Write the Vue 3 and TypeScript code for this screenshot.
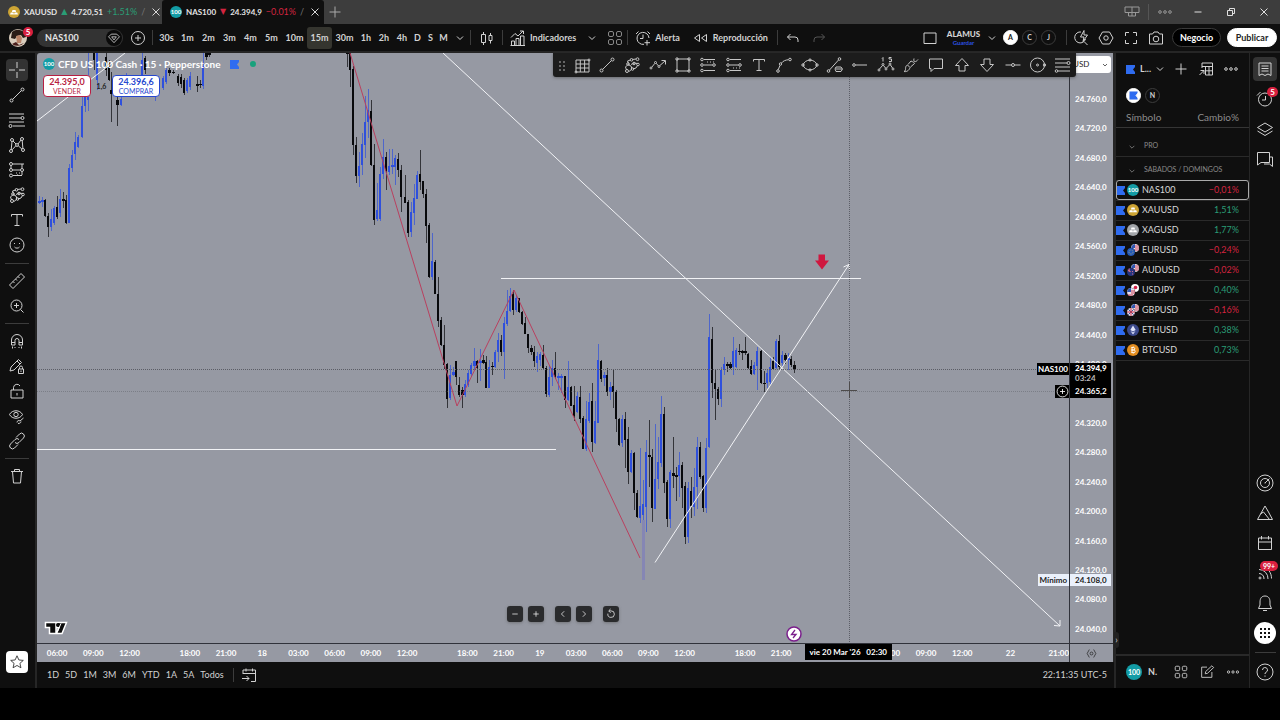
<script setup lang="ts">
import { h } from 'vue'

type Candle = [x: number, high: number, low: number, top: number, bottom: number, up: 0 | 1]

const ring = (x: number, y: number, r: number): string =>
  `M${x - r} ${y}a${r} ${r} 0 1 0 ${2 * r} 0a${r} ${r} 0 1 0 ${-2 * r} 0`

const paths: Record<string, string> = {
  cross: 'M9 1v6M9 11v6M1 9h6M11 9h6',
  line: ring(3.5, 14.5, 1.5) + ring(14.5, 3.5, 1.5) + 'M4.6 13.4L13.4 4.6',
  fib: 'M1 3h15M1 7h12M1 11h15M5 15h12' + ring(14.5, 7, 1.5) + ring(2.5, 15, 1.5),
  pattern: ring(3, 15, 1.5) + ring(4, 4, 1.5) + ring(9, 9, 1.4) + ring(14, 3, 1.5) + ring(15, 14, 1.5) + 'M3.2 13.5L4 5.5M5 5l3 3M10 8l3-4M14.2 4.5l.7 8M10.2 9.8l3.7 3.2M7.8 9.8l-3.6 4',
  forecast: ring(3, 3, 1.5) + ring(3, 9, 1.5) + ring(3, 14.5, 1.5) + ring(14, 9, 1.5) + 'M5 3h11M5 9h7M5 14.5h9M3 4.5v3M14 3v4M14 11v3M8 12h1M11 12h1M9 14h1',
  brush: 'M3.500 14l-1-3L5 8.500 8 10l1 3-3 2.500M5.500 7.500L4.500 5 7.500 4M9.500 3.500L13 3M8 8.500L11 7l3.500.5M10 13l3-1 1.500-2.500' + ring(8.5, 3.8, 1.3) + ring(14.5, 3.2, 1.4) + ring(5, 8, 1.3) + ring(11, 7.5, 1.3) + ring(4, 15, 1.5) + ring(9.5, 13, 1.3) + ring(15, 8.5, 1.3),
  text: 'M3.5 5.500V3.500h11v2M9 3.500v11M6.500 14.500h5',
  smile: ring(9, 9, 7) + 'M6.500 7v1M11.500 7v1M6.500 11c1 1.500 4 1.500 5 0',
  ruler: 'M1.500 13L13 1.500 16.500 5 5 16.500zM5 9.500l1.500 1.500M7.500 7L9 8.500M10 4.500l1.500 1.500',
  zoomin: ring(8.5, 8.500, 5.500) + 'M12.500 12.500l3 3M8.500 6v5M6 8.500h5',
  magnet: 'M3.500 13V8a5.500 5.500 0 0 1 11 0v5h-3.500V8.500a2 2 0 0 0-4 0V13zM3.500 10.500H7M11 10.500h3.500M4.500 14.500v2M13.500 14.500v2M7 15v1M11 15v1',
  editlock: 'M2 14l1-4 7.500-7.500 3 3L6 13zM9 4l3 3M10.500 12h5v4.500h-5zM11.500 12v-1.500a1.500 1.500 0 0 1 3 0V12M13 13.500v1.500',
  lock: 'M3 8h12v8H3zM5.500 8V5.500a3.500 3.500 0 0 1 6.500-1.500M9 11v2.500',
  eye: 'M1.500 7.500C4 2.500 12 2.500 14.500 7.500 12 12.500 4 12.500 1.500 7.500z' + ring(8, 7.5, 2.200) + 'M9 15.500c0-2 2-2.500 3-1.500l3.500-3M10 16.500c2 0 3-1 3-2',
  link: 'M8 5.500L11.500 2a2.800 2.800 0 0 1 4 4l-4.500 4.500a2.800 2.800 0 0 1-4 0M10 12.500L6.500 16a2.800 2.800 0 0 1-4-4L7 7.500a2.800 2.800 0 0 1 4 0',
  trash: 'M3 4.500h12M6.500 4.500V2.500h5v2M4.500 4.500l1 11.500h7l1-11.500',
  star: 'M9 2l2.100 4.700 5 .5-3.800 3.300 1.100 5L9 12.900l-4.400 2.600 1.100-5L1.900 7.200l5-.5z',
  grid: 'M3 4h13v12H3zM3 8h13M3 12h13M7.300 4v12M11.600 4v12' + ring(3, 16, 1) + ring(16, 4, 1),
  zigzag: ring(2, 12, 1) + ring(6.5, 6.5, 1) + ring(10, 10.500, 1) + 'M2.800 11.200l3-3.800M7.300 7.300l2 2.500M10.700 9.700L16 5M12.500 4.500H16.500V8.500',
  rect: 'M3 3h12v12H3z' + ring(3, 3, 1.2) + ring(15, 3, 1.2) + ring(3, 15, 1.2) + ring(15, 15, 1.2),
  longpos: ring(3, 3.5, 1.3) + ring(3, 9, 1.3) + ring(3, 14.5, 1.3) + ring(15, 9, 1.3) + 'M5 3.500h11M5 9h8.500M5 14.500h11M8 6h1M11 6h1M14 6h1',
  shortpos: ring(3, 3.5, 1.3) + ring(3, 9, 1.3) + ring(3, 14.5, 1.3) + ring(15, 9, 1.3) + 'M5 3.500h11M5 9h8.500M5 14.500h11M8 12h1M11 12h1M14 12h1',
  curve: ring(3, 15, 1.3) + ring(5.5, 8, 1.200) + ring(15, 3.500, 1.300) + 'M3.300 13.600L5 9.300M6.500 7c1.500-2 4-3 7-3.300',
  ellipse: 'M2 9C4 2.500 14 2.500 16 9 14 15.500 4 15.500 2 9z' + ring(2, 9, 1.2) + ring(16, 9, 1.2) + ring(9, 4, 1.1) + ring(9, 14, 1.1),
  lineobj: ring(2.5, 15, 1.300) + ring(13.5, 3, 1.3) + 'M3.500 14L12.500 4M10 11h5l1.500 2-1.500 2.500h-5L9 13zM10 13h6',
  ray: ring(3, 9, 1.300) + 'M4.500 9H16',
  elliott: ring(2, 14, 1) + ring(6, 8.500, 1) + ring(9, 13, 1) + ring(13, 8, 1) + ring(16, 13, 1) + 'M2.500 13L5.500 9.500M6.500 9.500l2 2.500M9.600 12l2.800-3M13.500 9l2 3M6 1.500v4M5 2.500l1-1M14.500 1.500H12V3h2.500v2.500H12',
  paint: 'M2 15.500c3-1 0-5 3.500-6.500L8 11.500C7 15 4 16 2 15.500zM6 8.500L9 5M8.500 11l4-3.500M9 5c2 1 3 1 3.500 2.500M12 2.500c-1 4 2 4 4 1',
  callout: 'M2.500 3h13v9.500H7L4 15.500v-3H2.500z',
  up: 'M9 2.500l6.500 7H12V15H6V9.500H2.500z',
  down: 'M9 15.500l6.500-7H12V3H6v5.500H2.500z',
  hline: ring(9, 9, 1.500) + 'M1.500 9h6M10.500 9h6',
  circle: ring(8.5, 9, 7) + ring(8.5, 9, 1) + ring(15.5, 9, 1.200),
  levels: 'M1 3h15M1 7h12M1 11h15M4 15h12' + ring(14.500, 7, 1.500) + ring(2.500, 15, 1.300),
  chev: 'M6 7.500l3 3 3-3',
  plus: 'M9 3.500v11M3.500 9h11',
  pluscircle: ring(9, 9, 6.5) + 'M9 6v6M6 9h6',
  candles: 'M3.500 5.500h4v8h-4zM5.500 3v2.500M5.500 13.500V16M11 6.500h3v5h-3zM12.500 4v2.500M12.500 11.500V14.500',
  chart: 'M2.500 16v-4h3v4M7 16V9.500h3V16M11.500 16V7h3.500v9M1.500 16.500h14.500M2 8.500l4-4 3 2.500 5-5M11 2h3.500v3',
  tiles: 'M2.500 4a1.500 1.500 0 0 1 1.500-1.500h2A1.500 1.500 0 0 1 7.500 4v2A1.500 1.500 0 0 1 6 7.500H4A1.500 1.500 0 0 1 2.500 6zM10.500 4A1.500 1.500 0 0 1 12 2.500h2A1.500 1.500 0 0 1 15.500 4v2A1.500 1.500 0 0 1 14 7.500h-2A1.500 1.500 0 0 1 10.500 6zM2.500 12A1.500 1.500 0 0 1 4 10.500h2A1.500 1.500 0 0 1 7.500 12v2A1.500 1.500 0 0 1 6 15.500H4A1.500 1.500 0 0 1 2.500 14zM10.500 12a1.500 1.500 0 0 1 1.500-1.500h2a1.500 1.500 0 0 1 1.500 1.500v2a1.500 1.500 0 0 1-1.500 1.500h-2a1.500 1.500 0 0 1-1.500-1.500z',
  alarm: 'M10 15.300A6 6 0 1 1 15 9M9 5.500v4H6M2 5l2.500-2.500M13.500 2.500L16 5M13 11v5.500M10.500 13.700h5.500',
  clock: ring(9, 9.5, 6.500) + 'M9.500 6v4H6M1 5.500L4.500 2M13.500 2l3.500 3.500',
  replay: 'M7.500 5.500v7L2.500 9zM14.500 5.500v7L9.500 9z',
  undo: 'M6.500 5L3.500 8l3 3M3.500 8h7.500a3 3 0 0 1 3 3v2',
  redo: 'M11.500 5l3 3-3 3M14.500 8H7a3 3 0 0 0-3 3v2',
  square: 'M3 4h12v10.500H3z',
  search: 'M9 3A5.500 5.500 0 1 0 13.500 10M12 12.500l3.500 3.500M12 1.500L8.500 8H12l-1 4.500 4.500-6.500H12z',
  hex: 'M5.500 3h7L16 9l-3.500 6h-7L2 9z' + ring(9, 9, 2.200),
  full: 'M3.500 7V3.500H7M11 3.500h3.500V7M14.500 11v3.500H11M7 14.500H3.500V11',
  camera: 'M2.500 5h3L7 3h4l1.500 2h3v10h-13z' + ring(9, 10, 2.800),
  gem: 'M5.500 4h7L16 7.500 9 15 2 7.500zM6 7.500h6l-3 4z',
  table: 'M5 3h10.500v12H8.500M5 3v5M5 6.500h10.500M8.500 10.800h7M8.500 6.500V15M12 6.500V15M2.500 15l4.500-4.500M3.500 10.500H7V14',
  dots: ring(4, 9, 1.300) + ring(9, 9, 1.300) + ring(14, 9, 1.3),
  list: 'M3 3h12v12.500l-3-1.500-3 1.500-3-1.500-3 1.500zM5.500 6h7M5.500 8.500h7M5.500 11h7',
  layers: 'M9 3l7.500 4.500L9 12 1.500 7.500zM1.500 11L9 15.500 16.500 11',
  chat: 'M1.500 2.500h12v10H5L1.500 15zM16.500 7v9.500L13.500 14H8M13.500 7h3',
  target: ring(9, 9, 8) + ring(9, 9, 4.500) + 'M9 9l4.500-4.500M9 8.500v1',
  mount: 'M9 2L12.500 8M9 2L1.500 15.500h15L12.500 8M4.500 10L7.500 8l6 7.500',
  calendar: 'M2.500 4h13v11.500h-13zM2.500 8h13M5.500 2v3.500M12.500 2v3.500',
  feed: ring(4, 14, 1) + 'M3 9.500a5 5 0 0 1 5 5.500M3 5.500A9 9 0 0 1 12 15M6 2.500c6 1 9.500 6 9.500 12',
  bell: 'M9 2c-3.500 0-5 2.500-5 6v3l-1.500 3.500h13L14 11V8c0-3.500-1.500-6-5-6zM7 16.500h4',
  apps: 'M4 4h2v2H4zM8 4h2v2H8zM12 4h2v2h-2zM4 8h2v2H4zM8 8h2v2H8zM12 8h2v2h-2zM4 12h2v2H4zM8 12h2v2H8zM12 12h2v2h-2z',
  help: ring(9, 9, 8) + 'M6.500 7a2.500 2.500 0 1 1 3.500 2.300c-.7.300-1 .7-1 1.700M9 12.500v1.200',
  pencil: 'M9 3.500H3v11.500h11.500V9M7 11l.5-2.500 7-6.500 2 2-7 6.500z',
  goto: 'M3 8V4h12.500v11.500H11M3 7.500h12.500M6 2.500v3M12.500 2.500v3M2 12.500h7M6.500 10l2.500 2.500L6.500 15',
  layout: 'M2 4h14v5.500H2zM9 4v9M5.500 9.500V13h7V9.500',
  close: 'M5.500 5.500l7 7M12.500 5.500l-7 7',
  min: 'M5.500 9h7',
  add: 'M5.500 9h7M9 5.500v7',
  max: 'M5.500 7.500h5v5h-5zM7.500 7.500v-2h5v5h-2',
  left: 'M10.500 5.500L7 9l3.500 3.500',
  right: 'M7.500 5.500L11 9l-3.500 3.500',
  reset: 'M5 8.500A4.200 4.200 0 1 0 9 5H6.500M8.500 2.500L6 5l2.500 2.500',
  gear: 'M6 3.500L3 9l3 5.500M12 3.500L15 9l-3 5.500' + ring(9, 9, 2),
}

const Icon = (p: { n: string }) =>
  h('svg', { class: 'ic', viewBox: '0 0 18 18', 'aria-hidden': 'true' }, [h('path', { d: paths[p.n] })])
Icon.props = ['n']

const intervals = [
  { t: '30s', c: 'w21' }, { t: '1m', c: 'w21' }, { t: '2m', c: 'w21' }, { t: '3m', c: 'w21' },
  { t: '4m', c: 'w21' }, { t: '5m', c: 'w21' }, { t: '10m', c: 'w25' }, { t: '15m', c: 'w25' },
  { t: '30m', c: 'w25' }, { t: '1h', c: 'w18' }, { t: '2h', c: 'w18' }, { t: '4h', c: 'w18' },
  { t: 'D', c: 'w13' }, { t: 'S', c: 'w13' }, { t: 'M', c: 'w13' },
]

const toolGroups = [
  ['cross', 'line', 'fib', 'pattern', 'forecast', 'brush', 'text', 'smile'],
  ['ruler', 'zoomin'],
  ['magnet', 'editlock', 'lock', 'eye', 'link'],
  ['trash'],
]

const favorites = ['grid', 'line', 'brush', 'zigzag', 'rect', 'longpos', 'shortpos', 'text', 'curve', 'ellipse',
  'lineobj', 'ray', 'elliott', 'paint', 'callout', 'up', 'down', 'hline', 'circle', 'levels']

// The 24.360,0 step is left blank: the crosshair price sits on it.
const prices = Array.from({ length: 19 }, (_, i) =>
  i === 10 ? '' : `24.${String(760 - i * 40).padStart(3, '0')},0`)

// '|' is a session break, '.' a half-width break, '' a step behind the date tooltip.
const times = ['06:00', '09:00', '12:00', '|', '18:00', '21:00', '18', '03:00', '06:00', '09:00', '12:00', '|',
  '18:00', '21:00', '19', '03:00', '06:00', '09:00', '12:00', '|', '18:00', '21:00', '', '', '06:00',
  '09:00', '12:00', '.', '22', '.', '21:00']

const ranges = ['1D', '5D', '1M', '3M', '6M', 'YTD', '1A', '5A', 'Todos']

const symbols = [
  { s: 'NAS100', v: '−0,01%', k: 'nas' },
  { s: 'XAUUSD', v: '1,51%', k: 'gold' },
  { s: 'XAGUSD', v: '1,77%', k: 'silver' },
  { s: 'EURUSD', v: '−0,24%', k: 'pair', a: '#2459b8', b: 'us' },
  { s: 'AUDUSD', v: '−0,02%', k: 'pair', a: '#28357f', b: 'us' },
  { s: 'USDJPY', v: '0,40%', k: 'pair', a: 'us', b: 'jp' },
  { s: 'GBPUSD', v: '−0,16%', k: 'pair', a: 'gb', b: 'us' },
  { s: 'ETHUSD', v: '0,38%', k: 'eth' },
  { s: 'BTCUSD', v: '0,73%', k: 'btc' },
]

const candles: Candle[] = [
  [39, 196, 204, 201, 203, 1], [42, 197, 207, 200, 202, 1], [45, 199, 217, 200, 216, 0], [48, 213, 237, 216, 227, 0],
  [51, 209, 231, 219, 227, 1], [54, 206, 225, 208, 223, 1], [57, 196, 219, 207, 217, 0], [60, 189, 217, 199, 213, 1],
  [63, 192, 208, 199, 201, 0], [66, 195, 224, 200, 223, 0], [69, 164, 223, 168, 223, 1], [72, 150, 172, 155, 168, 1],
  [75, 132, 160, 142, 154, 1], [78, 135, 148, 137, 147, 1], [82, 96, 138, 106, 137, 1], [85, 83, 112, 96, 106, 1],
  [88, 53, 111, 82, 100, 1], [94, 53, 70, 53, 60, 0], [97, 53, 90, 53, 80, 1], [106, 53, 76, 57, 70, 0],
  [109, 60, 81, 64, 80, 0], [111, 72, 122, 90, 94, 0], [117, 95, 126, 100, 105, 0], [121, 92, 106, 99, 105, 1],
  [126, 73, 92, 75, 90, 1], [142, 53, 80, 60, 76, 1], [145, 56, 74, 58, 70, 0], [155, 80, 101, 82, 96, 1], [163, 76, 90, 78, 88, 1],
  [166, 68, 84, 70, 82, 1], [169, 68, 76, 70, 73, 0], [173, 70, 74, 72, 73, 0], [178, 74, 86, 76, 83, 0],
  [181, 74, 88, 77, 84, 0], [184, 78, 95, 80, 93, 0], [187, 78, 93, 80, 91, 1], [190, 72, 90, 76, 87, 1],
  [197, 76, 92, 84, 86, 0], [200, 80, 88, 84, 85, 0], [203, 53, 89, 66, 86, 1], [206, 53, 60, 53, 57, 0], [209, 53, 57, 53, 55, 0],
  [347, 53, 67, 53, 54, 0], [350, 53, 87, 53, 70, 0], [353, 66, 155, 69, 145, 0], [356, 137, 183, 145, 176, 0],
  [359, 152, 187, 166, 176, 1], [362, 133, 175, 144, 165, 1], [365, 96, 158, 122, 145, 1], [368, 89, 138, 110, 122, 1],
  [371, 100, 166, 111, 165, 0], [374, 144, 225, 165, 220, 0], [377, 183, 221, 210, 219, 1], [380, 167, 221, 174, 219, 1],
  [383, 139, 179, 157, 174, 1], [386, 152, 190, 157, 171, 0], [389, 149, 175, 166, 172, 1], [392, 149, 174, 165, 167, 1],
  [395, 155, 185, 158, 167, 1], [398, 153, 177, 159, 170, 0], [401, 165, 212, 170, 197, 0], [405, 175, 203, 197, 203, 0],
  [408, 200, 237, 202, 233, 0], [411, 202, 237, 212, 232, 1], [414, 184, 225, 198, 213, 1], [417, 171, 199, 175, 199, 1],
  [420, 150, 190, 174, 182, 0], [423, 181, 198, 181, 194, 0], [426, 189, 243, 194, 226, 0], [429, 223, 278, 225, 277, 0],
  [432, 233, 280, 261, 277, 1], [435, 260, 294, 262, 294, 0], [438, 277, 327, 294, 321, 0], [441, 317, 346, 320, 345, 0],
  [444, 325, 369, 345, 365, 0], [447, 363, 408, 364, 399, 0], [450, 365, 400, 375, 398, 1], [453, 367, 376, 372, 375, 1],
  [456, 361, 385, 361, 377, 0], [459, 377, 397, 385, 395, 0], [462, 387, 408, 390, 395, 0], [465, 380, 397, 384, 395, 1],
  [468, 370, 387, 373, 385, 1], [471, 363, 377, 365, 374, 1], [474, 348, 370, 361, 366, 1], [477, 360, 383, 361, 368, 0],
  [480, 349, 381, 361, 363, 1], [483, 355, 364, 360, 363, 0], [486, 356, 388, 362, 388, 0], [489, 360, 388, 367, 388, 1],
  [492, 362, 375, 366, 367, 0], [495, 350, 368, 352, 367, 1], [498, 333, 362, 340, 352, 1], [501, 335, 356, 340, 352, 0],
  [504, 317, 379, 323, 352, 1], [507, 290, 326, 311, 324, 1], [510, 288, 312, 296, 311, 1], [513, 290, 315, 294, 310, 0],
  [516, 295, 312, 298, 310, 1], [519, 298, 313, 298, 312, 0], [522, 311, 325, 312, 324, 0], [525, 317, 334, 323, 334, 0],
  [528, 334, 353, 334, 348, 0], [531, 345, 355, 348, 352, 0], [534, 346, 367, 352, 361, 0], [537, 352, 372, 356, 363, 1],
  [540, 352, 366, 354, 360, 1], [543, 345, 370, 355, 368, 0], [546, 366, 397, 368, 394, 0], [549, 366, 397, 377, 395, 1],
  [552, 360, 386, 368, 377, 1], [555, 352, 379, 368, 377, 0], [558, 373, 390, 376, 378, 1], [561, 374, 393, 376, 378, 1],
  [565, 376, 408, 376, 400, 0], [568, 361, 401, 387, 400, 1], [571, 386, 406, 387, 406, 0], [574, 386, 421, 405, 416, 0],
  [577, 392, 413, 396, 412, 1], [580, 386, 423, 397, 419, 0], [583, 416, 449, 418, 449, 0], [586, 401, 451, 419, 449, 1],
  [589, 393, 423, 402, 421, 1], [592, 383, 452, 401, 442, 0], [595, 401, 444, 421, 443, 1], [598, 344, 423, 360, 423, 1],
  [601, 360, 382, 361, 379, 0], [604, 372, 386, 375, 378, 1], [607, 368, 396, 375, 392, 0], [610, 382, 400, 387, 392, 1],
  [613, 370, 408, 386, 392, 0], [616, 390, 432, 392, 419, 0], [619, 418, 446, 419, 445, 0], [622, 415, 447, 419, 443, 1],
  [625, 412, 468, 419, 440, 0], [628, 427, 484, 439, 472, 0], [631, 450, 473, 453, 472, 1], [634, 452, 510, 453, 493, 0],
  [637, 490, 518, 493, 517, 0], [640, 448, 523, 506, 518, 1], [643, 480, 520, 504, 515, 1], [646, 440, 532, 452, 507, 1],
  [649, 420, 487, 455, 457, 0], [652, 449, 522, 457, 508, 0], [655, 424, 509, 479, 509, 1], [658, 437, 489, 462, 479, 1],
  [661, 396, 467, 414, 463, 1], [664, 407, 493, 414, 483, 0], [667, 480, 527, 482, 519, 0], [670, 470, 528, 472, 519, 1],
  [673, 437, 488, 473, 476, 0], [676, 467, 501, 475, 477, 0], [679, 452, 497, 465, 476, 1], [682, 462, 508, 465, 488, 0],
  [685, 482, 544, 486, 537, 0], [688, 482, 543, 488, 537, 1], [691, 477, 518, 491, 506, 0], [694, 468, 516, 487, 507, 1],
  [697, 437, 509, 447, 487, 1], [700, 442, 479, 447, 477, 0], [703, 475, 512, 476, 508, 0], [706, 438, 513, 448, 508, 1],
  [709, 314, 448, 337, 447, 1], [712, 327, 398, 339, 383, 0], [715, 370, 420, 383, 389, 0], [718, 387, 405, 389, 399, 0],
  [721, 367, 407, 370, 399, 1], [724, 357, 375, 364, 370, 1], [727, 362, 372, 364, 366, 0], [730, 362, 369, 364, 368, 0],
  [733, 337, 375, 351, 367, 1], [736, 348, 368, 350, 367, 1], [739, 344, 355, 351, 352, 0], [742, 350, 360, 351, 353, 0],
  [745, 337, 355, 351, 353, 0], [748, 353, 369, 354, 368, 0], [751, 360, 375, 366, 374, 0], [754, 362, 375, 365, 374, 1],
  [757, 347, 390, 351, 366, 1], [761, 350, 384, 351, 383, 0], [764, 371, 392, 383, 384, 0], [767, 370, 388, 373, 383, 1],
  [770, 357, 384, 367, 382, 1], [773, 357, 370, 361, 369, 0], [776, 339, 369, 341, 368, 1], [779, 335, 369, 341, 367, 0],
  [782, 351, 367, 355, 363, 1], [785, 353, 364, 355, 360, 0], [788, 353, 370, 358, 360, 1], [791, 356, 367, 359, 365, 0],
  [794, 361, 373, 365, 369, 0],
]
</script>

<template>
  <div class="app">
    <header class="tabs">
      <div class="tab">
        <svg class="coin" viewBox="0 0 12 12"><circle cx="6" cy="6" r="6" fill="#cda434" /><path d="M4.500 4h3l.6 2H3.900zM2.800 6.500h2.700L6 8.500H2zM6.500 6.500h2.700l.8 2H6z" fill="#fff" /></svg>
        <b>XAUUSD</b><i class="pos">▲</i><b>4.720,51</b><span class="pos">+1.51%</span><span class="dim">/</span>
        <button aria-label="Cerrar pestaña"><Icon n="close" /></button>
      </div>
      <div class="tab active">
        <span class="hundred">100</span>
        <b>NAS100</b><i class="neg">▼</i><b>24.394,9</b><span class="neg">−0.01%</span><span class="dim">/</span>
        <button aria-label="Cerrar pestaña"><Icon n="close" /></button>
      </div>
      <button class="newtab" aria-label="Nueva pestaña"><Icon n="plus" /></button>
      <div class="window">
        <button class="muted" aria-label="Diseño"><Icon n="layout" /></button>
        <button class="muted sep" aria-label="Más"><Icon n="dots" /></button>
        <button aria-label="Minimizar"><Icon n="min" /></button>
        <button aria-label="Restaurar"><Icon n="max" /></button>
        <button aria-label="Cerrar"><Icon n="close" /></button>
      </div>
    </header>

    <nav class="toolbar">
      <button class="avatar" aria-label="Perfil">
        <svg viewBox="0 0 18 18"><circle cx="9" cy="9" r="9" fill="#d9cdbd" /><path d="M3 3a9 9 0 0 1 13 1l1 4-3 1-2-3-4 1-2 3-4-1z" fill="#2a1c17" /><path d="M7 7l4-1 2 3-1 5H8z" fill="#b98368" /><path d="M3 15l4-2 3 3 5-2a9 9 0 0 1-12 1z" fill="#4b1f1c" /></svg>
        <span class="badge">5</span>
      </button>
      <button class="symbol"><span>NAS100</span><span class="gem"><Icon n="gem" /></span></button>
      <button class="w28" aria-label="Comparar"><Icon n="pluscircle" /></button>
      <hr />
      <button v-for="i in intervals" :key="i.t" class="iv" :class="[i.c, { on: i.t === '15m' }]">{{ i.t }}</button>
      <button class="w20" aria-label="Intervalos"><Icon n="chev" /></button>
      <hr />
      <button class="w31" aria-label="Velas"><Icon n="candles" /></button>
      <hr />
      <button class="labeled ind"><Icon n="chart" />Indicadores</button>
      <button class="w20" aria-label="Favoritos"><Icon n="chev" /></button>
      <button class="w25 gray" aria-label="Plantillas"><Icon n="tiles" /></button>
      <hr />
      <button class="labeled"><Icon n="alarm" />Alerta</button>
      <button class="labeled replay"><Icon n="replay" />Reproducción</button>
      <hr />
      <button class="w31" aria-label="Deshacer"><Icon n="undo" /></button>
      <button class="w21 off" aria-label="Rehacer"><Icon n="redo" /></button>
      <div class="right">
        <button class="w28" aria-label="Pantalla"><Icon n="square" /></button>
        <button class="save"><b>ALAMUS</b><small>Guardar</small></button>
        <button class="w18" aria-label="Diseños"><Icon n="chev" /></button>
        <button class="dot white">A</button>
        <button class="dot">C</button>
        <button class="dot">J</button>
        <hr />
        <button class="w25" aria-label="Búsqueda rápida"><Icon n="search" /></button>
        <button class="w25" aria-label="Configuración"><Icon n="hex" /></button>
        <button class="w25" aria-label="Pantalla completa"><Icon n="full" /></button>
        <button class="w25" aria-label="Captura"><Icon n="camera" /></button>
        <button class="pill">Negocio</button>
        <button class="pill publish">Publicar</button>
      </div>
    </nav>

    <main class="main">
      <aside class="tools">
        <template v-for="(g, gi) in toolGroups" :key="gi">
          <div class="group">
            <button v-for="t in g" :key="t" :class="{ on: t === 'cross' }" :aria-label="t"><Icon :n="t" /></button>
          </div>
          <hr v-if="gi < 3" />
        </template>
        <button class="fav" aria-label="Favoritos"><Icon n="star" /></button>
      </aside>

      <section class="center">
        <div class="chart">
          <div class="plot">
            <svg class="canvas" viewBox="37 53 1032 590" preserveAspectRatio="none">
              <g v-for="(c, i) in candles" :key="i" :fill="c[5] ? '#2f50dc' : '#08090c'" shape-rendering="crispEdges">
                <rect :x="c[0]" :y="c[1]" width="1" :height="c[2] - c[1]" opacity="0.7" />
                <rect :x="c[0] - 1" :y="c[3]" :width="c[3] < c[4] - 5 ? 2 : 3" :height="c[4] - c[3]" />
              </g>
              <rect x="642" y="520" width="3" height="60" fill="#8586b4" />
              <path class="red" d="M350 53L457 406L514 290L640 558" />
              <path class="white" d="M37 121L125 53M443 53L1060 626M1054 625.500l6 .5v-6M655 562.500L849 264.500M843.500 267l5.500-2.500.5 6" />
              <path class="white crisp" d="M501 278.500H861M37 449.500H556" />
              <path class="dots" d="M37 369.500H1069" />
              <path class="dots faint" d="M37 391.500H1069" />
              <path class="dots" d="M849.500 53V643" />
              <path d="M841 390.500h16M849.500 382v16" stroke="#4d4b4b" />
              <path d="M818.500 254.500h6.500v6h4L822 269.500 815 260.500h3.500z" fill="#cf173f" />
            </svg>

            <div class="legend">
              <div class="title"><span class="hundred">100</span><b>CFD US 100 Cash · 15 · Pepperstone</b><svg class="flag" viewBox="0 0 9 9"><path d="M0 0h9v2L7 4.500 9 7v2H0z" fill="#2f6cf0" /></svg><span class="live" /></div>
              <div class="quote">
                <button class="sell"><b>24.395,0</b>VENDER</button>
                <span>1,6</span>
                <button class="buy"><b>24.396,6</b>COMPRAR</button>
              </div>
            </div>

            <svg class="logo" viewBox="0 0 24 15"><path d="M1.500 1.500h10.500v11H5.500v-6h-4zM13 1.500h9.500l-4.500 11h-5.500l2.500-6h-2z" fill="#0b0b0b" stroke="#fff" stroke-width="1.500" /><circle cx="14" cy="4" r="2" fill="#0b0b0b" /><path d="M17 2.500l-4 9" stroke="#fff" /></svg>

            <div class="controls">
              <button aria-label="Alejar"><Icon n="min" /></button>
              <button aria-label="Acercar" class="space"><Icon n="add" /></button>
              <button aria-label="Izquierda"><Icon n="left" /></button>
              <button aria-label="Derecha" class="space"><Icon n="right" /></button>
              <button aria-label="Restablecer"><Icon n="reset" /></button>
            </div>
            <button class="event" aria-label="Evento"><svg viewBox="0 0 16 16"><circle cx="8" cy="8" r="7" fill="#fff" stroke="#7b1f8c" stroke-width="1.500" /><path d="M9 4L5.500 8.500h4.500L7 12" fill="none" stroke="#7b1f8c" stroke-width="1.300" /></svg></button>
            <span class="tag sym">NAS100</span>
            <button class="tag add" aria-label="Añadir"><Icon n="pluscircle" /></button>
            <span class="tag minlabel">Mínimo</span>
          </div>

          <div class="prices">
            <select aria-label="Divisa"><option>USD</option></select>
            <Icon n="chev" class="selchev" />
            <div class="scale"><span v-for="(p, i) in prices" :key="i">{{ p }}</span></div>
            <div class="last"><b>24.394,9</b><span>03:24</span></div>
            <div class="cursor">24.365,2</div>
            <div class="low">24.108,0</div>
          </div>

          <div class="times">
            <div class="track">
              <span v-for="(t, i) in times" :key="i" :class="{ gap: t === '|', half: t === '.' }">{{ t === '|' || t === '.' ? '' : t }}</span>
            </div>
            <div class="when">vie 20 Mar '26 &nbsp; 02:30</div>
          </div>
          <button class="corner" aria-label="Ajustes de escala"><Icon n="gear" /></button>

          <div class="floating">
            <i class="grip" />
            <button v-for="f in favorites" :key="f" :aria-label="f"><Icon :n="f" /></button>
          </div>
        </div>

        <footer class="ranges">
          <button v-for="r in ranges" :key="r">{{ r }}</button>
          <hr />
          <button aria-label="Ir a"><Icon n="goto" /></button>
          <span class="clock">22:11:35 UTC-5</span>
        </footer>
      </section>

      <section class="panel">
        <div class="phead">
          <button class="list"><svg class="flag" viewBox="0 0 9 9"><path d="M0 0h9v2L7 4.500 9 7v2H0z" fill="#2f6cf0" /></svg>L...<Icon n="chev" /></button>
          <button aria-label="Añadir símbolo"><Icon n="plus" /></button>
          <button aria-label="Tabla"><Icon n="table" /></button>
          <button aria-label="Más"><Icon n="dots" /></button>
        </div>
        <div class="lists">
          <button class="dot white" aria-label="Lista azul"><svg class="flag" viewBox="0 0 9 9"><path d="M0 0h9v2L7 4.500 9 7v2H0z" fill="#2f6cf0" /></svg></button>
          <button class="dot">N</button>
        </div>
        <table>
          <colgroup><col class="cmark"><col><col class="cval"></colgroup>
          <thead><tr><th colspan="2">Símbolo</th><th class="val">Cambio%</th></tr></thead>
          <tbody>
            <tr class="section first"><td colspan="3"><Icon n="chev" />PRO</td></tr>
            <tr class="section"><td colspan="3"><Icon n="chev" />SABADOS / DOMINGOS</td></tr>
            <tr v-for="r in symbols" :key="r.s" :class="{ sel: r.s === 'NAS100' }">
              <td><svg class="flag" viewBox="0 0 9 9"><path d="M0 0h9v2L7 4.500 9 7v2H0z" fill="#2f6cf0" /></svg></td>
              <td>
                <div class="name">
                  <span v-if="r.k === 'nas'" class="hundred">100</span>
                  <svg v-else class="coin" viewBox="0 0 12 12">
                    <template v-if="r.k === 'pair'">
                      <g :fill="r.b === 'jp' ? '#fff' : '#e9e4ec'"><circle cx="8" cy="4" r="4" /></g>
                      <circle v-if="r.b === 'jp'" cx="8.500" cy="3.500" r="1.800" fill="#d5224a" />
                      <path v-else d="M8 2h3.500M8 4h4M6 6h5.500" stroke="#cf3348" stroke-width="0.900" />
                      <path v-if="r.b === 'us'" d="M4.500 2.500A4 4 0 0 1 8 0v4H4.500z" fill="#3156b0" />
                      <circle cx="4" cy="8" r="4.300" fill="#0f0f0f" />
                      <circle cx="4" cy="8" r="3.900" :fill="r.a === 'us' || r.a === 'gb' ? '#e6e0ea' : r.a" />
                      <path v-if="r.a === 'us'" d="M4 7h4M4 9h4M1 11h5" stroke="#cf3348" stroke-width="0.900" />
                      <path v-if="r.a === 'us'" d="M.2 7.500A4 4 0 0 1 4 4v4H.2z" fill="#3156b0" />
                      <path v-if="r.a === 'gb'" d="M1.300 5.300l5.400 5.400M6.700 5.300l-5.400 5.400" stroke="#3f4f96" />
                      <path v-if="r.a === 'gb'" d="M4 4.100v7.800M.1 8h7.800" stroke="#cf3348" />
                      <circle v-if="r.s === 'EURUSD'" cx="4" cy="8" r="2" fill="none" stroke="#d6c768" stroke-width="0.700" stroke-dasharray="0.700 0.900" />
                      <path v-if="r.s === 'AUDUSD'" d="M.8 6l3 1.800M2.200 4.500V8M5.500 7v1M5 10h1" stroke="#e5738a" stroke-width="0.900" />
                    </template>
                    <template v-else-if="r.k === 'eth'"><circle cx="6" cy="6" r="6" fill="#3c4a8c" /><path d="M6 1.500L8.700 6 6 7.600 3.300 6zM3.500 7L6 10.500 8.500 7 6 8.500z" fill="#dfe4fa" /></template>
                    <template v-else-if="r.k === 'btc'"><circle cx="6" cy="6" r="6" fill="#e28d20" /><path d="M4.500 3.500h2a1.200 1.200 0 0 1 0 2.500h-2M4.500 6h2.400a1.300 1.300 0 0 1 0 2.600H4.500M5 3v6M6.300 2.500v1M6.300 8.500v1" fill="none" stroke="#fff" stroke-width="0.900" /></template>
                    <template v-else><circle cx="6" cy="6" r="6" :fill="r.k === 'gold' ? '#cda434' : '#a2a5a9'" /><path d="M4.500 3.500h3l.6 2H3.900zM2.800 6.200h2.700l.5 2H2zM6.500 6.200h2.700l.8 2H6z" fill="#fff" /></template>
                  </svg>
                  <span>{{ r.s }}</span>
                </div>
              </td>
              <td class="val" :class="r.v.startsWith('−') ? 'neg' : 'pos'">{{ r.v }}</td>
            </tr>
          </tbody>
        </table>
        <div class="detail">
          <span class="hundred big">100</span><b>N.</b>
          <button aria-label="Cuadrícula"><Icon n="tiles" /></button>
          <button aria-label="Nota"><Icon n="pencil" /></button>
          <button aria-label="Más"><Icon n="dots" /></button>
        </div>
        <button class="handle" aria-label="Contraer panel">›</button>
      </section>

      <aside class="rail">
        <button class="on" aria-label="Lista de seguimiento"><Icon n="list" /></button>
        <button aria-label="Alertas"><Icon n="clock" /><span class="badge">5</span></button>
        <button aria-label="Capas"><Icon n="layers" /></button>
        <button aria-label="Chats"><Icon n="chat" /></button>
        <button class="push" aria-label="Filtros"><Icon n="target" /></button>
        <button aria-label="Pine"><Icon n="mount" /></button>
        <button aria-label="Calendario"><Icon n="calendar" /></button>
        <button aria-label="Noticias"><Icon n="feed" /><span class="badge wide">99+</span></button>
        <button aria-label="Notificaciones"><Icon n="bell" /></button>
        <button class="apps" aria-label="Productos"><Icon n="apps" /></button>
        <hr />
        <button aria-label="Ayuda"><Icon n="help" /></button>
      </aside>
    </main>
  </div>
</template>

<style>
body { background: #000; }
</style>

<style scoped>
.app { display: flex; flex-direction: column; box-sizing: border-box; height: 100vh; min-height: 600px; padding-bottom: 32px; background: #000; color: #d2d2d2; font: 400 9px/12px Lato, "Open Sans", sans-serif; overflow: hidden; }
.app *, .app *::before { box-sizing: border-box; }
button { display: flex; align-items: center; justify-content: center; flex: none; padding: 0; border: 0; background: none; color: inherit; font: inherit; cursor: pointer; position: relative; }
hr { flex: none; margin: 0; border: 0; background: #3c3c3c; }
.ic { display: block; flex: none; width: 18px; height: 18px; fill: none; stroke: currentColor; stroke-width: 1; }
.pos { color: #2a9d76; }
.neg { color: #d3243f; }
.coin { display: block; flex: none; width: 12px; height: 12px; }
.hundred { display: flex; align-items: center; justify-content: center; flex: none; width: 12px; height: 12px; border-radius: 50%; background: #139ca5; color: #fff; font: 700 6px/12px Lato, sans-serif; }
.flag { display: block; flex: none; width: 9px; height: 9px; }

.tabs { display: flex; align-items: stretch; flex: none; height: 24px; background: #3d3d3d; }
.tab { display: flex; align-items: center; gap: 4px; flex: none; width: 162px; padding: 0 3px 0 8px; }
.tab b { color: #e4e4e4; font-size: 8px; }
.tab i { font: 400 8px/10px "DejaVu Sans", sans-serif; }
.tab.active { border-radius: 3px 3px 0 0; background: #0f0f0f; }
.tab button { margin-left: auto; width: 14px; color: #d8d8d8; }
.dim { color: #777; }
.newtab { width: 22px; color: #aaa; }
.window { display: flex; margin-left: auto; color: #e0e0e0; }
.window button { width: 33px; }
.window .muted { color: #999; }
.window .sep { border-left: 1px solid #555; margin: 4px 0; }

.toolbar { display: flex; align-items: center; flex: none; height: 29px; padding-left: 8px; border-bottom: 2px solid #262626; background: #0f0f0f; font-weight: 700; }
.toolbar hr { width: 1px; height: 15px; }
.avatar { width: 20px; height: 20px; margin-right: 9px; }
.avatar svg { width: 18px; height: 18px; }
.badge { position: absolute; top: -1px; right: -5px; min-width: 10px; height: 10px; border-radius: 5px; background: #d8203f; color: #fff; font: 700 8px/10px Lato, sans-serif; text-align: center; }
.symbol { justify-content: space-between; width: 86px; height: 18px; padding: 0 1px 0 8px; border-radius: 9px; background: #333; color: #e4e4e4; }
.gem { display: flex; align-items: center; justify-content: center; width: 16px; height: 16px; border-radius: 50%; background: #0a0a0a; }
.gem .ic { width: 14px; height: 14px; }
.w28 { width: 29px; }
.w31 { width: 31px; }
.w25 { width: 25px; }
.w21 { width: 21px; }
.w20 { width: 20px; }
.w18 { width: 18px; }
.w13 { width: 13px; }
.toolbar > hr + .iv { margin-left: 3px; }
.iv { height: 22px; border-radius: 3px; }
.iv.on { background: #35352f; }
.labeled { gap: 3px; padding: 0 6px; }
.replay { padding-right: 9px; }
.gray { color: #888; }
.off { color: #555; }
.right { display: flex; align-items: center; margin-left: auto; padding-right: 3px; }
.save { flex-direction: column; width: 39px; }
.save b { font-size: 8px; line-height: 10px; }
.save small { color: #2b51e2; font-size: 6px; line-height: 7px; }
.dot { width: 15px; height: 15px; margin: 0 2px; border: 1px solid #3c3c3c; border-radius: 50%; font: 700 7px/13px Lato, sans-serif; }
.dot.white { border-color: #fff; background: #fff; color: #111; }
.right hr { margin: 0 1px 0 8px; }
.pill { height: 19px; width: 49px; margin-left: 4px; border: 1px solid #3a3a3a; border-radius: 10px; background: #000; color: #fff; }
.publish { width: 50px; margin-left: 6px; border-color: #fff; background: #fff; color: #222; }

.main { display: flex; flex: 1; min-height: 0; background: #262626; }
.tools { display: flex; flex-direction: column; align-items: center; flex: none; width: 35px; padding: 5px 1px 15px 0; background: #0f0f0f; }
.tools .group { display: flex; flex-direction: column; gap: 3px; padding: 1px 0; }
.tools .group:first-child { padding-bottom: 2px; }
.tools button { width: 22px; height: 22px; border-radius: 4px; }
.tools .on { background: #333; }
.tools hr { width: 24px; height: 1px; margin: 5px 0; }
.tools .fav { margin-top: auto; background: #fff; color: #333; }
.tools .fav .ic { width: 16px; height: 16px; }

.center { display: flex; flex-direction: column; flex: 1; min-width: 0; margin: 0 3px 0 2px; }
.chart { position: relative; display: grid; grid-template: minmax(0, 1fr) 19px / minmax(0, 1fr) 44px; flex: 1; min-height: 0; border-radius: 3px 0 0; background: #9699a3; }
.plot { position: relative; min-width: 0; min-height: 0; }
.canvas { position: absolute; inset: 0; display: block; width: 100%; height: 100%; border-radius: 3px 0 0; }
.red { fill: none; stroke: #b9405f; stroke-width: 1; }
.white { fill: none; stroke: #f2f3f6; stroke-width: 1; }
.crisp { shape-rendering: crispEdges; }
.dots { fill: none; stroke: #5b5d66; stroke-dasharray: 1 1; shape-rendering: crispEdges; }
.faint { opacity: 0.45; }
.legend { position: absolute; top: 5px; left: 6px; }
.title { display: flex; align-items: center; gap: 3px; height: 12px; color: #fff; font-size: 10px; }
.title .flag { margin-left: 6px; }
.live { width: 6px; height: 6px; margin-left: 8px; border-radius: 50%; background: #18a17c; }
.quote { display: flex; align-items: center; margin-top: 5px; color: #222; font-size: 7px; font-weight: 700; }
.quote span { width: 21px; text-align: center; }
.quote button { flex-direction: column; width: 48px; height: 22px; border: 1px solid; border-radius: 4px; background: #fff; font: 400 7px/9px Lato, sans-serif; }
.quote button b { font-size: 9px; line-height: 10px; }
.quote .sell { color: #b71f43; }
.quote .buy { color: #2748cf; }
.logo { position: absolute; bottom: 7px; left: 7px; width: 24px; height: 15px; }
.controls { position: absolute; left: 45.5%; bottom: 21px; display: flex; gap: 5px; }
.controls button { width: 16px; height: 16px; border-radius: 3px; background: #2a2b2d; color: #eee; box-shadow: 0 1px 3px #5558; }
.controls .ic { width: 14px; height: 14px; }
.controls .space { margin-right: 6px; }
.event { position: absolute; left: 72.600%; bottom: 1px; width: 16px; height: 16px; }
.event svg { width: 16px; height: 16px; }
.tag { position: absolute; right: 0; height: 12px; padding: 0 1px; background: #000; color: #fff; font: 700 8px/12px Lato, sans-serif; }
.sym { top: 52.500%; }
.add { top: 56.200%; width: 14px; height: 13px; }
.add .ic { width: 15px; height: 15px; }
.minlabel { top: 88.300%; padding: 0 2px; background: #eaf0fb; color: #222; }
.prices { position: relative; border-left: 1px solid #30323a; color: #fff; font: 700 8px/12px Lato, sans-serif; }
.prices select { position: absolute; top: 3px; left: 0; width: 41px; height: 17px; padding: 0 0 0 3px; border: 0; border-radius: 3px; background: #fff; color: #222; font: 400 8px/17px Lato, sans-serif; appearance: none; }
.selchev { position: absolute; top: 6px; left: 29px; width: 12px; height: 12px; color: #111; }
.scale { display: flex; flex-direction: column; justify-content: space-between; height: 100%; padding: 40px 0 8px 5px; }
.scale span { height: 12px; }
.last, .cursor, .low { position: absolute; left: 0; width: 41px; padding-left: 5px; background: #000; }
.last { top: 52.500%; height: 22px; line-height: 11px; }
.last b, .last span { display: block; }
.last span { color: #bbb; line-height: 9px; }
.cursor { top: 56.200%; height: 13px; }
.low { top: 88.300%; background: #eaf0fb; color: #222; }
.times { position: relative; border-top: 1px solid #30323a; padding-left: 2px; color: #fff; font: 700 8px/18px Lato, sans-serif; }
.track { display: flex; width: calc(100% + 8px); height: 100%; }
.track span { display: flex; justify-content: center; flex: 36 1 0; min-width: 0; }
.track .gap { flex-grow: 24; }
.track .half { flex-grow: 12; }
.when { position: absolute; top: 0; left: 74.400%; width: 87px; height: 16px; background: #000; line-height: 17px; text-align: center; }
.corner { border-top: 1px solid #30323a; border-left: 1px solid #30323a; color: #222; }
.corner .ic { width: 13px; height: 13px; }
.floating { position: absolute; top: 0; right: 37px; display: flex; width: 523px; height: 24px; padding-left: 3px; border-radius: 0 0 3px 3px; background: #1c1c1c; color: #c6c6c6; box-shadow: 0 1px 3px #4448; }
.floating button { flex: 1; }
.grip { width: 7px; height: 11px; margin: 7px 4px 0 2px; background: radial-gradient(circle, #666 1px, transparent 1px) 0 0 / 4px 4px; }
.ranges { display: flex; align-items: center; flex: none; height: 26px; padding: 0 7px 0 10px; background: #0f0f0f; gap: 6px; margin-right: -1px; }
.ranges hr { width: 1px; height: 14px; margin: 0 0 0 3px; }
.clock { margin-left: auto; }

.panel { position: relative; display: flex; flex-direction: column; flex: none; width: 133px; background: #0f0f0f; }
.phead { display: flex; align-items: center; height: 32px; padding-left: 10px; }
.phead button { width: 25px; }
.phead .list { justify-content: flex-start; gap: 5px; width: 42px; font-weight: 700; }
.phead .list .ic { margin-left: -5px; }
.lists { display: flex; height: 22px; padding: 3px 0 0 8px; }
table { width: 100%; border-collapse: collapse; table-layout: fixed; }
.cmark { width: 11px; }
.cval { width: 52px; }
th { height: 20px; padding: 0 0 0 10px; border-bottom: 1px solid #353535; color: #8c8c8c; font-size: 10px; font-weight: 400; text-align: left; }
td { height: 20px; padding: 0; border-bottom: 1px solid #2a2a2a; font-size: 9px; }
.section td { height: 24px; padding-top: 5px; color: #8a8a8a; font-size: 7px; }
.section.first td { height: 29px; padding-top: 10px; }
.section .ic { display: inline-block; width: 14px; height: 14px; margin: 0 5px 0 9px; vertical-align: middle; }
.sel { outline: 1px solid #aaa; outline-offset: -1px; border-radius: 3px; }
.name { display: flex; align-items: center; gap: 3px; color: #d8d8d8; }
table .val { padding: 0 10px 0 0; text-align: right; }
.detail { display: flex; align-items: center; height: 34px; margin-top: auto; padding-left: 10px; border-top: 2px solid #292929; }
.detail b { width: 20px; margin-left: 6px; }
.detail button { width: 26px; }
.detail .ic { width: 16px; height: 16px; }
.big { width: 16px; height: 16px; font-size: 7px; }
.handle { position: absolute; bottom: 40px; left: -2px; width: 5px; height: 16px; border-radius: 0 3px 3px 0; background: #222; }

.rail { display: flex; flex-direction: column; align-items: center; flex: none; width: 30px; margin-left: 1px; padding: 1px 0; background: #0f0f0f; }
.rail button { width: 24px; height: 30px; }
.rail .on::before { content: ""; position: absolute; inset: 3px 0; border-radius: 4px; background: #333; }
.rail .on .ic { position: relative; }
.rail .push { margin-top: auto; }
.rail .badge { top: 3px; right: -1px; min-width: 11px; }
.rail .wide { min-width: 18px; right: -1px; font-size: 7px; }
.rail .apps::before { content: ""; position: absolute; top: 4px; left: 1px; width: 22px; height: 22px; border-radius: 50%; background: #fff; }
.rail .apps .ic { position: relative; color: #111; fill: #111; stroke: none; }
.rail hr { width: 21px; height: 1px; margin: 4px 0; }
</style>
